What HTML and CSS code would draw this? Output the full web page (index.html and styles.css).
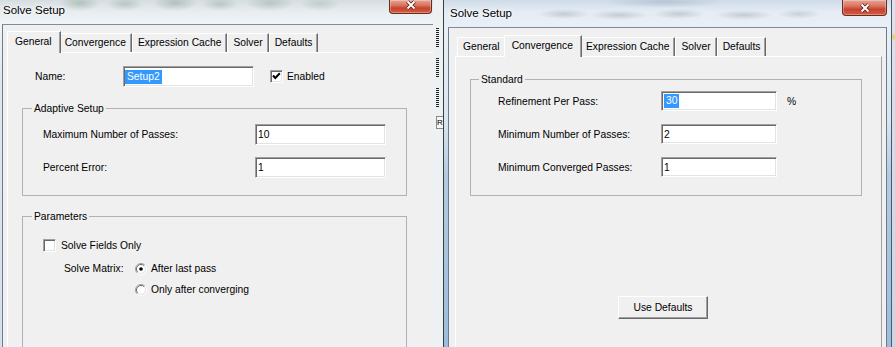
FILE: index.html
```html
<!DOCTYPE html>
<html lang="en">
<head>
  <meta charset="UTF-8" />
  <title>Solve Setup</title>
  <link rel="stylesheet" href="styles.css">
</head>
<body>
  <div class="desk">

    <!-- first dialog: General tab -->
    <div class="win win-a">
      <div class="titlebar">
        <span class="title">Solve Setup</span>
        <span class="close">
          <svg width="12" height="10" viewBox="0 0 12 10"><path d="M2.5 1.5L9.5 8.5M9.5 1.5L2.5 8.5" stroke="#5a1b12" stroke-width="3.6"/><path d="M2.5 1.5L9.5 8.5M9.5 1.5L2.5 8.5" stroke="#fff" stroke-width="2"/></svg>
        </span>
      </div>
      <div class="client">
        <div class="tabs">
          <span class="tab active">General</span>
          <span class="tab">Convergence</span>
          <span class="tab">Expression Cache</span>
          <span class="tab">Solver</span>
          <span class="tab">Defaults</span>
        </div>
        <div class="page page-a">
          <div class="name-row">
            <span class="name-lbl">Name:</span>
            <div class="field w-name"><span class="sel">Setup2</span></div>
            <span class="check enabled">
              <svg width="11" height="11" viewBox="0 0 11 11"><polyline points="2,4.5 4.3,7 8.8,2.3" fill="none" stroke="#000" stroke-width="2"/></svg>
            </span>
            <span class="check-lbl">Enabled</span>
          </div>

          <fieldset class="group adaptive">
            <legend>Adaptive Setup</legend>
            <div class="form-grid">
              <span>Maximum Number of Passes:</span>
              <div class="field">10</div>
              <span>Percent Error:</span>
              <div class="field">1</div>
            </div>
          </fieldset>

          <fieldset class="group params">
            <legend>Parameters</legend>
            <div class="check-row">
              <span class="check"></span>
              <span>Solve Fields Only</span>
            </div>
            <div class="matrix">
              <span class="matrix-lbl">Solve Matrix:</span>
              <div class="radios">
                <div class="radio-row">
                  <svg width="12" height="12" viewBox="0 0 12 12"><circle cx="6" cy="6" r="5" fill="#fff"/><path d="M2.1 9.9A5.5 5.5 0 0 1 9.9 2.1" fill="none" stroke="#a0a0a0"/><path d="M2.8 9.2A4.5 4.5 0 0 1 9.2 2.8" fill="none" stroke="#696969"/><path d="M9.9 2.1A5.5 5.5 0 0 1 2.1 9.9" fill="none" stroke="#fff"/><path d="M9.2 2.8A4.5 4.5 0 0 1 2.8 9.2" fill="none" stroke="#e3e3e3"/><circle cx="6" cy="6" r="1.8" fill="#000"/></svg>
                  <span>After last pass</span>
                </div>
                <div class="radio-row">
                  <svg width="12" height="12" viewBox="0 0 12 12"><circle cx="6" cy="6" r="5" fill="#fff"/><path d="M2.1 9.9A5.5 5.5 0 0 1 9.9 2.1" fill="none" stroke="#a0a0a0"/><path d="M2.8 9.2A4.5 4.5 0 0 1 9.2 2.8" fill="none" stroke="#696969"/><path d="M9.9 2.1A5.5 5.5 0 0 1 2.1 9.9" fill="none" stroke="#fff"/><path d="M9.2 2.8A4.5 4.5 0 0 1 2.8 9.2" fill="none" stroke="#e3e3e3"/></svg>
                  <span>Only after converging</span>
                </div>
              </div>
            </div>
          </fieldset>
        </div>
      </div>
    </div>

    <!-- bit of the application behind -->
    <div class="behind">
      <span class="grip first"></span>
      <span class="grip"></span>
      <span class="grip"></span>
      <span class="stub">R</span>
    </div>

    <!-- second dialog: Convergence tab -->
    <div class="win win-b">
      <div class="titlebar">
        <span class="title">Solve Setup</span>
        <span class="close">
          <svg width="12" height="10" viewBox="0 0 12 10"><path d="M2.5 1.5L9.5 8.5M9.5 1.5L2.5 8.5" stroke="#5a1b12" stroke-width="3.6"/><path d="M2.5 1.5L9.5 8.5M9.5 1.5L2.5 8.5" stroke="#fff" stroke-width="2"/></svg>
        </span>
      </div>
      <div class="client">
        <div class="tabs">
          <span class="tab">General</span>
          <span class="tab active">Convergence</span>
          <span class="tab">Expression Cache</span>
          <span class="tab">Solver</span>
          <span class="tab">Defaults</span>
        </div>
        <div class="page page-b">
          <fieldset class="group standard">
            <legend>Standard</legend>
            <div class="form-grid conv">
              <span>Refinement Per Pass:</span>
              <div class="field"><span class="sel">30</span></div>
              <span class="unit">%</span>
              <span>Minimum Number of Passes:</span>
              <div class="field">2</div>
              <span></span>
              <span>Minimum Converged Passes:</span>
              <div class="field">1</div>
              <span></span>
            </div>
          </fieldset>
          <button class="btn">Use Defaults</button>
        </div>
      </div>
    </div>

    <div class="edge"></div>
  </div>
</body>
</html>
```

FILE: styles.css
```css
* { box-sizing: border-box; }
html, body { margin: 0; }
body { width: 895px; height: 347px; overflow: hidden; font-family: "Liberation Sans", Arial, sans-serif; font-size: 10.3px; color: #000; background: #dfe8f0; }
.desk { display: flex; height: 347px; }

/* windows */
.win { display: flex; flex-direction: column; height: 347px; }
.win-a {
  width: 433px; padding-left: 2px;
  background:
    radial-gradient(ellipse 20px 8px at 80px 3px, rgba(105,135,110,.35), transparent),
    radial-gradient(ellipse 18px 7px at 125px 4px, rgba(110,130,120,.3), transparent),
    radial-gradient(ellipse 22px 8px at 175px 3px, rgba(100,130,115,.35), transparent),
    radial-gradient(ellipse 18px 7px at 220px 4px, rgba(110,135,125,.3), transparent),
    radial-gradient(ellipse 24px 8px at 270px 3px, rgba(105,130,115,.3), transparent),
    radial-gradient(ellipse 20px 7px at 320px 4px, rgba(120,140,130,.25), transparent),
    linear-gradient(180deg, #d6dde0 0, #e8edf0 12px, #f1f4f6 24px, #dfe7ee 80px, #d4e0eb 347px);
}
.win-b {
  width: 449px; padding: 0 4px;
  border-left: 1px solid #34433a; border-right: 1px solid #4a5a6c;
  background:
    radial-gradient(ellipse 26px 5px at 120px 14px, rgba(115,125,140,.3), transparent),
    radial-gradient(ellipse 30px 5px at 175px 15px, rgba(115,125,140,.3), transparent),
    radial-gradient(ellipse 26px 5px at 235px 14px, rgba(115,125,140,.3), transparent),
    radial-gradient(ellipse 30px 5px at 300px 15px, rgba(115,125,140,.3), transparent),
    radial-gradient(ellipse 22px 5px at 355px 14px, rgba(115,125,140,.25), transparent),
    radial-gradient(ellipse 60px 6px at 220px 2px, rgba(120,140,165,.3), transparent),
    linear-gradient(180deg, #cedbe8 0, #e5ecf4 12px, #e9eff6 27px, #dbe5ef 120px, #b4cae0 175px, #9dbcdc 347px);
}

.titlebar { display: flex; justify-content: space-between; align-items: flex-start; flex-shrink: 0; }
.win-a .titlebar { height: 24px; padding-left: 1px; }
.win-b .titlebar { height: 27px; padding-left: 2px; }
.title { font-size: 11.5px; text-shadow: 0 0 6px #fff, 0 0 3px #fff; }
.win-a .title { line-height: 20px; }
.win-b .title { line-height: 26px; }

.close {
  display: flex; justify-content: center;
  border: 1px solid #6b2a20; border-top: none; border-radius: 0 0 4px 4px;
  background: linear-gradient(180deg, #e7a494 0, #d97561 40%, #c7432e 62%, #d35c42 100%);
  box-shadow: inset 0 0 0 1px rgba(255,255,255,.3);
}
.win-a .close { width: 43px; height: 14px; margin-right: 1px; padding-top: 0; }
.win-b .close { width: 45px; height: 16px; padding-top: 3px; }

.client { flex: 1; background: #f0f0f0; border-top: 1px solid #7e8c9a; border-left: 1px solid #6d7c8b; overflow: hidden; }
.win-a .client { padding: 6px 0 0 4px; }
.win-b .client { padding: 7px 0 0 6px; border-right: 1px solid #6d7c8b; }

/* tabs */
.tabs { display: flex; align-items: flex-end; height: 21px; padding-left: 2px; }
.tab {
  height: 19px; line-height: 18px; padding: 0 5px; white-space: nowrap;
  border-top: 1px solid #fff; border-left: 1px solid #fff; border-right: 1px solid #6b6b6b;
  box-shadow: inset -1px 0 #a0a0a0;
}
.tab.active { position: relative; z-index: 1; height: 22px; line-height: 19px; margin: 0 -2px -1px; padding: 0 8px 0 7px; background: #f0f0f0; }

.page { height: 320px; border-top: 1px solid #fff; border-left: 1px solid #fff; border-right: 1px solid #a0a0a0; }
.page-a { width: 440px; }
.page-b { width: 427px; }

/* controls */
.field {
  height: 21px; display: flex; align-items: center; padding-left: 2px; background: #fff;
  border: 1px solid; border-color: #a0a0a0 #fff #fff #a0a0a0;
  box-shadow: inset 1px 1px #696969, inset -1px -1px #e3e3e3;
}
.sel { background: #3399ff; color: #fff; line-height: 14px; padding: 0 2px; }
.check {
  width: 13px; height: 13px; display: inline-flex; background: #fff; flex-shrink: 0;
  border: 1px solid; border-color: #a0a0a0 #fff #fff #a0a0a0;
  box-shadow: inset 1px 1px #696969, inset -1px -1px #e3e3e3;
}

.name-row { display: flex; align-items: center; height: 21px; margin-top: 13px; padding-left: 27px; }
.name-lbl { width: 88px; }
.w-name { width: 131px; padding-left: 1px; }
.enabled { margin-left: 16px; }
.check-lbl { margin-left: 4px; }

.group { margin: 0; padding: 0; border: 1px solid #aeb3b7; min-width: 0; }
.group legend { padding: 0 2px; line-height: 13px; }
.adaptive { margin: 15px 0 0 14px; width: 385px; padding: 9px 0 17px; }
.adaptive legend, .params legend { margin-left: 9px; }
.params { margin: 14px 0 0 14px; width: 385px; height: 160px; padding-top: 16px; }
.standard { margin: 16px 0 0 14px; width: 392px; padding: 5px 0 18px; }
.standard legend { margin-left: 8px; }

.form-grid { display: grid; grid-template-columns: 212px 131px; grid-auto-rows: 21px; row-gap: 12px; align-items: center; padding-left: 20px; }
.form-grid.conv { grid-template-columns: 163px 116px auto; grid-auto-rows: 20px; row-gap: 13px; padding-left: 27px; }
.conv .field { height: 20px; }
.unit { margin-left: 10px; }

.check-row { display: flex; align-items: center; gap: 5px; height: 13px; padding-left: 20px; }
.matrix { display: flex; margin-top: 10px; padding-left: 41px; }
.matrix-lbl { width: 71px; line-height: 13px; }
.radios { display: flex; flex-direction: column; gap: 8px; }
.radio-row { display: flex; align-items: center; gap: 4px; height: 13px; }

.btn {
  display: block; margin: 100px 0 0 162px; width: 90px; height: 23px; padding: 0;
  font: inherit; color: #000; background: #f0f0f0;
  border: 1px solid; border-color: #fff #696969 #696969 #fff;
  box-shadow: inset -1px -1px #a0a0a0;
}

/* application showing between the two dialogs */
.behind { width: 10px; display: flex; flex-direction: column; padding-left: 3px; background: #eef1f3; }
.grip { width: 3px; height: 20px; margin-top: 10px; background: repeating-linear-gradient(180deg, #222 0 1px, transparent 1px 2px); }
.grip.first { margin-top: 28px; }
.stub { width: 7px; height: 13px; margin-top: 8px; border: 1px solid #8a8a8a; border-right: none; background: #f6f6f6; font-size: 8px; line-height: 11px; padding-left: 0; }

.edge { width: 3px; background: radial-gradient(ellipse 4px 4px at 2px 37px, #eccf3e, transparent), linear-gradient(180deg, #d9e4ee, #c6d7e8); }
```
